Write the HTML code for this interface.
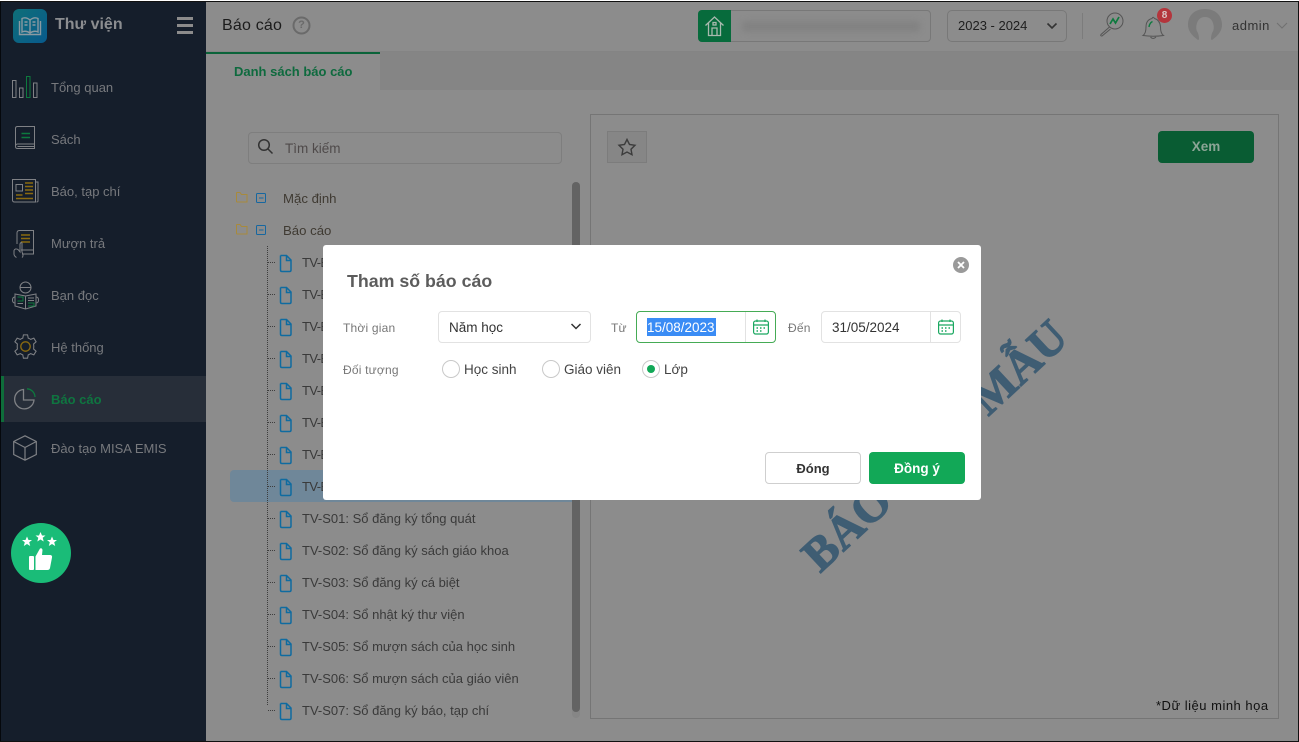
<!DOCTYPE html>
<html lang="vi"><head><meta charset="utf-8"><title>Báo cáo</title>
<style>
*{box-sizing:border-box}
html,body{margin:0;padding:0}
body{width:1299px;height:742px;overflow:hidden;position:relative;background:#8c8c8c;font-family:"Liberation Sans","DejaVu Sans",sans-serif;font-size:13px;color:#333}
.a{position:absolute;white-space:nowrap}
.t{position:absolute;white-space:nowrap;height:20px;line-height:20px;margin-top:1px}
svg{position:absolute;overflow:visible;fill:none}
.nav{color:#77797d;font-size:13px;left:51px}
.tr{left:302px;color:#3a3a3a;font-size:13px}
.lab{color:#777;font-size:12px;letter-spacing:.2px;margin-top:0}
.in{position:absolute;background:#fff;border:1px solid #e2e2e2;border-radius:4px}
.rad{position:absolute;width:18px;height:18px;border:1px solid #c9c9c9;border-radius:50%;background:#fff}
</style></head><body>
<!-- frame -->
<div class="a" style="left:0;top:0;width:1299px;height:1px;background:#fff"></div>
<div class="a" style="left:0;top:1px;width:1299px;height:1px;background:#111"></div>
<div class="a" style="left:0;top:741px;width:1299px;height:1px;background:#111"></div>
<div class="a" style="left:1298px;top:1px;width:1px;height:741px;background:#111"></div>

<!-- sidebar -->
<div class="a" style="left:0;top:2px;width:206px;height:739px;background:#151e2b;border-left:1px solid #05080c"></div>
<div class="a" style="left:1px;top:376px;width:205px;height:46px;background:#272e39"></div>
<div class="a" style="left:1px;top:376px;width:3px;height:46px;background:#0e6e3a"></div>

<div class="a" style="left:13px;top:9px;width:34px;height:34px;border-radius:6px;background:linear-gradient(135deg,#0f6f78,#085a8c)"></div>
<svg style="left:18px;top:15px" width="24" height="22" viewBox="0 0 24 22" stroke="#8a9aa2" stroke-width="1.4"><path d="M12 5C9 2.500 6 2.500 4 3.500V17C6 16 9 16 12 18C15 16 18 16 20 17V3.500C18 2.500 15 2.500 12 5ZM12 5V18M1.500 6V19.500H22.500V6M6.500 7H9.500M6.500 10H9.500M14.500 7H17.500M14.500 10H17.500"/></svg>
<div class="t" style="left:55px;top:14px;color:#8b8d90;font-size:16px;font-weight:bold">Thư viện</div>
<div class="a" style="left:177px;top:17px;width:16px;height:3px;background:#8c8c8c"></div>
<div class="a" style="left:177px;top:24px;width:16px;height:3px;background:#8c8c8c"></div>
<div class="a" style="left:177px;top:31px;width:16px;height:3px;background:#8c8c8c"></div>

<svg style="left:12px;top:76px" width="27" height="23" stroke="#7f8185" stroke-width="1"><rect x=".5" y="4.500" width="3.500" height="17"/><rect x="7.500" y="12" width="3.500" height="9.500"/><rect x="14.500" y=".5" width="3.500" height="21" stroke="#0d7a3e"/><rect x="21.500" y="7" width="3.500" height="14.500"/></svg>
<div class="t nav" style="top:77px">Tổng quan</div>

<svg style="left:15px;top:126px" width="21" height="26" stroke="#7f8185" stroke-width="1"><path d="M.5 20V2.500Q.5.500 2.500.500H19.500V18H2.500Q.5 18 .5 20.500Q.5 22.500 2.500 22.500H19.500V18M2.500 20.500H19.500"/><path d="M6.500 7.500H15M6.500 11.500H15" stroke="#0d7a3e" stroke-width="1.500"/></svg>
<div class="t nav" style="top:129px">Sách</div>

<svg style="left:12px;top:179px" width="27" height="24" stroke="#7f8185" stroke-width="1"><path d="M.5.500H23.500V23H2.500Q.5 23 .5 21ZM23.500 3H26V22Q26 23 24.500 23"/><rect x="4" y="5.500" width="6.500" height="6.500"/><path d="M13 4H21M13 7.500H21M13 11H21M13 14.500H21M4 16H10.500M4 19.500H21" stroke="#8a6a10" stroke-width="1.500"/></svg>
<div class="t nav" style="top:181px">Báo, tạp chí</div>

<svg style="left:13px;top:230px" width="22" height="28" stroke="#7f8185" stroke-width="1"><path d="M4 14V3Q4 .5 6.500.5H20.500V20H8M20.500 20V24H9"/><path d="M8 5H17M8 8.500H17M8 12H17" stroke="#8a6a10" stroke-width="1.500"/><path d="M9 22V13Q7.500 12 7 14V22L5 19.500Q2 18 1 20.500V24Q1 26 3.500 27.500M9 27.500Q11 26 9 22"/></svg>
<div class="t nav" style="top:233px">Mượn trả</div>

<svg style="left:12px;top:281px" width="27" height="29" stroke="#7f8185" stroke-width="1"><circle cx="13.500" cy="6.500" r="5.500"/><path d="M8 6.500H19M3 13L13.500 15L24 13V25L13.500 28L3 25ZM13.500 15V28M3 16Q.5 16 .5 19T3 22M24 16Q26.500 16 26.500 19T24 22"/><path d="M5.500 16H11V20H5.500M16 22H22V25H16" stroke="#0d7a3e"/><path d="M5.500 22.500H11M16 17H22M16 19.500H22"/></svg>
<div class="t nav" style="top:285px">Bạn đọc</div>

<svg style="left:13px;top:334px" width="25" height="25" viewBox="0 0 24 24" stroke="#7f8185" stroke-width="1"><path d="M10 .8H14L14.600 4Q16 4.500 17 5.200L20 4L22.200 7.500L19.800 9.600Q20.100 12 19.800 14.400L22.200 16.500L20 20L17 18.800Q16 19.500 14.600 20L14 23.200H10L9.400 20Q8 19.500 7 18.800L4 20L1.800 16.500L4.200 14.400Q3.900 12 4.200 9.600L1.800 7.500L4 4L7 5.200Q8 4.500 9.400 4Z"/><circle cx="12" cy="12" r="4.500" stroke="#8a6a10" stroke-width="1.300"/></svg>
<div class="t nav" style="top:337px">Hệ thống</div>

<svg style="left:14px;top:388px" width="22" height="22" stroke="#7f8185" stroke-width="1.300"><path d="M9.500 1.500A9.700 9.700 0 1 0 20 12H9.500Z"/><path d="M13 .8A8.500 8.500 0 0 1 21 9" stroke="#0d7a3e"/></svg>
<div class="t" style="left:51px;top:389px;color:#0f7540;font-weight:bold;font-size:13px">Báo cáo</div>

<svg style="left:13px;top:435px" width="24" height="26" stroke="#7f8185" stroke-width="1.200"><path d="M12 .8L23.300 6.500V19.500L12 25.200L.7 19.500V6.500ZM.7 6.500L12 12.500L23.300 6.500M12 12.500V25.200"/></svg>
<div class="t nav" style="top:438px">Đào tạo MISA EMIS</div>

<div class="a" style="left:11px;top:523px;width:60px;height:60px;border-radius:50%;background:#1abc78"></div>
<svg style="left:11px;top:523px" width="60" height="60"><g fill="#fff"><path d="M16 13.500L17.500 17H21L18.200 19.300L19.200 23L16 21L12.800 23L13.800 19.300L11 17H14.500Z"/><path d="M29.500 9L31 12.500H34.500L31.700 14.800L32.700 18.500L29.500 16.500L26.300 18.500L27.300 14.800L24.500 12.500H28Z"/><path d="M41 13.500L42.500 17H46L43.200 19.300L44.200 23L41 21L37.800 23L38.800 19.300L36 17H39.500Z"/><rect x="18" y="33" width="5" height="14" rx="1"/><path d="M24.500 33.500L29 25.500Q31 24.500 31.500 27L31 32H39.500Q41.500 32.500 41 34.500L39 45Q38.500 47 36.500 47H24.500Z"/></g></svg>

<!-- header -->
<div class="a" style="left:206px;top:51px;width:1092px;height:2px;background:#848484"></div>
<div class="t" style="left:222px;top:15px;color:#1c1c1c;font-size:16px;letter-spacing:.2px">Báo cáo</div>
<svg style="left:292px;top:16px" width="19" height="19" stroke="#6a6a6a" stroke-width="2"><circle cx="9.500" cy="9.500" r="8"/></svg>
<div class="t" style="left:292px;top:15px;width:19px;text-align:center;font-size:11px;font-weight:bold;color:#6a6a6a;margin-top:0">?</div>

<div class="a" style="left:698px;top:10px;width:233px;height:32px;border:1px solid #787878;border-radius:4px"></div>
<div class="a" style="left:698px;top:10px;width:33px;height:32px;background:#076b3c;border-radius:4px 0 0 4px"></div>
<svg style="left:704px;top:15px" width="21" height="22" stroke="#a9b9ae" stroke-width="1.300"><path d="M1.500 10.500L10.500 2L19.500 10.500M4.500 8V20.500H16.500V8M8 20.500V13H13V20.500"/><rect x="9" y="7.500" width="3" height="2.500"/></svg>
<div class="a" style="left:742px;top:21px;width:178px;height:11px;background:#828282;filter:blur(3px);border-radius:4px"></div>

<div class="a" style="left:947px;top:10px;width:120px;height:32px;border:1px solid #787878;border-radius:5px"></div>
<div class="t" style="left:958px;top:15px;color:#1e1e1e;font-size:13px">2023 - 2024</div>
<svg style="left:1046px;top:22px" width="12" height="8" stroke="#333" stroke-width="1.600"><path d="M1.500 1.500L6 6L10.500 1.500"/></svg>
<div class="a" style="left:1082px;top:13px;width:1px;height:26px;background:#7c7c7c"></div>

<svg style="left:1099px;top:12px" width="26" height="25" stroke="#555" stroke-width="1"><circle cx="16" cy="9" r="8"/><path d="M10.500 15L2 22.500Q1 24 3 24L11.500 17"/><path d="M11 12L14 7L16.500 11L20 5" stroke="#0d7a3e" stroke-width="1.700"/></svg>
<svg style="left:1141px;top:12px" width="26" height="28" stroke="#555" stroke-width="1"><path d="M2 23.500Q5 21.500 5 15Q5 8 11 6.500Q12 4 13.500 6.500Q19 8 19.500 15Q19.500 21.500 22.500 23.500Q12 25 2 23.500ZM9.500 25Q12 28 15 25"/><path d="M8 15Q8.500 11 11.500 9.500" stroke="#0d7a3e" stroke-width="1.400"/></svg>
<div class="a" style="left:1157px;top:8px;width:15px;height:15px;border-radius:50%;background:#b4353c;color:#d9c4c4;font-size:10px;font-weight:bold;text-align:center;line-height:15px">8</div>
<svg style="left:1188px;top:9px" width="34" height="32"><path d="M10 31Q0 24 0 16C0 6 7 0 17 0S34 6 34 16Q34 24 24 31Q22 31 24 24Q27 20 25 14Q23 8 17 8T9 14Q7 20 10 24Q12 31 10 31Z" fill="#7b7b7b"/></svg>
<div class="t" style="left:1232px;top:15px;color:#333;font-size:13px;letter-spacing:.5px">admin</div>
<svg style="left:1276px;top:22px" width="12" height="8" stroke="#707070" stroke-width="1"><path d="M1 1L6 6L11 1"/></svg>

<!-- tab strip -->
<div class="a" style="left:206px;top:52px;width:1092px;height:38px;background:#858585"></div>
<div class="a" style="left:206px;top:52px;width:174px;height:38px;background:#8c8c8c;border-top:2px solid #0a6339"></div>
<div class="t" style="left:234px;top:61px;color:#0e6a3e;font-weight:bold;font-size:13px">Danh sách báo cáo</div>

<!-- search -->
<div class="a" style="left:248px;top:132px;width:314px;height:32px;border:1px solid #7e7e7e;border-radius:4px"></div>
<svg style="left:257px;top:138px" width="17" height="17" stroke="#333" stroke-width="1.500"><circle cx="7" cy="7" r="5.300"/><path d="M11 11L15.500 15.500"/></svg>
<div class="t" style="left:285px;top:138px;color:#4f4a4a;font-size:13.500px">Tìm kiếm</div>

<!-- tree -->
<div class="a" style="left:230px;top:470px;width:350px;height:32px;background:#6f8799;border-radius:4px"></div>
<svg style="left:236px;top:192px" width="12" height="11" stroke="#a88a3c" stroke-width="1"><path d="M.5 9.500V1Q.5.5 1 .5H4L5.500 2.500H11V10H1Z"/></svg>
<svg style="left:236px;top:224px" width="12" height="11" stroke="#a88a3c" stroke-width="1"><path d="M.5 9.500V1Q.5.5 1 .5H4L5.500 2.500H11V10H1Z"/></svg>
<svg style="left:256px;top:193px" width="11" height="11" stroke="#1667a0" stroke-width="1"><rect x=".5" y=".5" width="9" height="9" rx="1"/><path d="M3 5H7.500"/></svg>
<svg style="left:256px;top:225px" width="11" height="11" stroke="#1667a0" stroke-width="1"><rect x=".5" y=".5" width="9" height="9" rx="1"/><path d="M3 5H7.500"/></svg>
<div class="t" style="left:283px;top:188px;color:#3f3a32;font-size:13.200px">Mặc định</div>
<div class="t" style="left:283px;top:220px;color:#3f3a32;font-size:13.200px">Báo cáo</div>
<div class="a" style="left:267px;top:246px;width:1px;height:459px;border-left:1px dotted #3d3d3d"></div>
<svg style="left:267px;top:250px" width="30" height="470" stroke="#0f6ba0" stroke-width="1.500">
<defs><path id="f" d="M13.500 5.500H19.500L24 10V20Q24 21.500 22.500 21.500H15Q13.500 21.500 13.500 20V5.500M19.500 5.500V10.500H24"/></defs>
<use href="#f" y="0"/><use href="#f" y="32"/><use href="#f" y="64"/><use href="#f" y="96"/><use href="#f" y="128"/><use href="#f" y="160"/><use href="#f" y="192"/><use href="#f" y="224"/><use href="#f" y="256"/><use href="#f" y="288"/><use href="#f" y="320"/><use href="#f" y="352"/><use href="#f" y="384"/><use href="#f" y="416"/><use href="#f" y="448"/>
<path d="M1 12.500H8M1 44.500H8M1 76.500H8M1 108.500H8M1 140.500H8M1 172.500H8M1 204.500H8M1 236.500H8M1 268.500H8M1 300.500H8M1 332.500H8M1 364.500H8M1 396.500H8M1 428.500H8M1 460.500H8" stroke="#3d3d3d" stroke-width="1" stroke-dasharray="1 1"/></svg>
<div class="t tr" style="top:508px">TV-S01: Sổ đăng ký tổng quát</div>
<div class="t tr" style="top:540px">TV-S02: Sổ đăng ký sách giáo khoa</div>
<div class="t tr" style="top:572px">TV-S03: Sổ đăng ký cá biệt</div>
<div class="t tr" style="top:604px">TV-S04: Sổ nhật ký thư viện</div>
<div class="t tr" style="top:636px">TV-S05: Sổ mượn sách của học sinh</div>
<div class="t tr" style="top:668px">TV-S06: Sổ mượn sách của giáo viên</div>
<div class="t tr" style="top:700px">TV-S07: Sổ đăng ký báo, tạp chí</div>
<div class="a" style="left:572px;top:182px;width:8px;height:536px;background:#868686;border-radius:4px"></div>
<div class="a" style="left:572px;top:182px;width:8px;height:530px;background:#636363;border-radius:4px"></div>

<!-- report panel -->
<div class="a" style="left:590px;top:114px;width:689px;height:605px;border:1px solid #757575"></div>
<div class="a" style="left:607px;top:131px;width:40px;height:32px;background:#868686;border:1px solid #7c7c7c"></div>
<svg style="left:617px;top:138px" width="20" height="18" stroke="#3c3c3c" stroke-width="1.400"><path d="M10 1.500L12.500 6.500L18 7.300L14 11.200L15 16.700L10 14L5 16.700L6 11.200L2 7.300L7.500 6.500Z"/></svg>
<div class="a" style="left:1158px;top:131px;width:96px;height:32px;background:#095c33;border-radius:4px;color:#8ca596;font-weight:bold;font-size:13.500px;text-align:center;line-height:32px">Xem</div>
<div class="a" style="left:935px;top:446px;width:0;height:0"><div class="a" style="left:-200px;top:-30px;width:400px;height:60px;line-height:60px;text-align:center;transform:rotate(-43deg);font-family:'Liberation Serif','DejaVu Serif',serif;font-weight:bold;font-size:47px;color:#3f5d73;-webkit-text-stroke:1.200px #3f5d73">BÁO CÁO MẪU</div></div>
<div class="t" style="left:1156px;top:695px;color:#111;font-size:13px;letter-spacing:.5px">*Dữ liệu minh họa</div>

<!-- partial rows peeking out left of modal -->
<div class="t tr" style="top:252px;letter-spacing:-.6px">TV-B</div>
<div class="t tr" style="top:284px;letter-spacing:-.6px">TV-B</div>
<div class="t tr" style="top:316px;letter-spacing:-.6px">TV-B</div>
<div class="t tr" style="top:348px;letter-spacing:-.6px">TV-B</div>
<div class="t tr" style="top:380px;letter-spacing:-.6px">TV-B</div>
<div class="t tr" style="top:412px;letter-spacing:-.6px">TV-B</div>
<div class="t tr" style="top:444px;letter-spacing:-.6px">TV-B</div>
<div class="t tr" style="top:476px;letter-spacing:-.6px">TV-B</div>

<!-- modal -->
<div class="a" style="left:323px;top:245px;width:658px;height:255px;background:#fff;border-radius:3px"></div>
<div class="t" style="left:347px;top:270px;color:#5c5c5c;font-size:17.800px;font-weight:bold">Tham số báo cáo</div>
<div class="a" style="left:953px;top:257px;width:16px;height:16px;border-radius:50%;background:#9a9a9a"></div>
<svg style="left:953px;top:257px" width="16" height="16" stroke="#fff" stroke-width="1.800"><path d="M5 5L11 11M11 5L5 11"/></svg>

<div class="t lab" style="left:343px;top:318px">Thời gian</div>
<div class="in" style="left:438px;top:311px;width:153px;height:32px"></div>
<div class="t" style="left:449px;top:317px;color:#333;font-size:13.500px">Năm học</div>
<svg style="left:570px;top:323px" width="12" height="8" stroke="#333" stroke-width="1.500"><path d="M1.500 1L6 5.500L10.500 1"/></svg>

<div class="t lab" style="left:611px;top:318px">Từ</div>
<div class="in" style="left:636px;top:311px;width:140px;height:32px;border-color:#45ab55"></div>
<div class="a" style="left:745px;top:312px;width:1px;height:30px;background:#e2e2e2"></div>
<div class="t" style="left:647px;top:317px;height:18px;line-height:20px;background:#3a8cf5;color:#fff;font-size:13.500px;width:69px;overflow:hidden">15/08/2023</div>
<svg style="left:753px;top:319px" width="16" height="16" stroke="#1aa860" stroke-width="1.200"><rect x=".6" y="2" width="14.800" height="13" rx="2"/><path d="M1 6H15M4 .5V3M12 .5V3"/><path d="M3.500 9H5M7 9H8.500M10.500 9H12M3.500 12H5M7 12H8.500" stroke-width="1.500"/></svg>

<div class="t lab" style="left:788px;top:318px">Đến</div>
<div class="in" style="left:821px;top:311px;width:140px;height:32px"></div>
<div class="a" style="left:930px;top:312px;width:1px;height:30px;background:#e2e2e2"></div>
<div class="t" style="left:832px;top:317px;color:#333;font-size:13.500px">31/05/2024</div>
<svg style="left:938px;top:319px" width="16" height="16" stroke="#1aa860" stroke-width="1.200"><rect x=".6" y="2" width="14.800" height="13" rx="2"/><path d="M1 6H15M4 .5V3M12 .5V3"/><path d="M3.500 9H5M7 9H8.500M10.500 9H12M3.500 12H5M7 12H8.500" stroke-width="1.500"/></svg>

<div class="t lab" style="left:343px;top:360px">Đối tượng</div>
<div class="rad" style="left:442px;top:360px"></div>
<div class="t" style="left:464px;top:359px;color:#444;font-size:13.500px">Học sinh</div>
<div class="rad" style="left:542px;top:360px"></div>
<div class="t" style="left:564px;top:359px;color:#444;font-size:13.500px">Giáo viên</div>
<div class="rad" style="left:642px;top:360px"></div>
<div class="a" style="left:647px;top:365px;width:8px;height:8px;border-radius:50%;background:#12a857"></div>
<div class="t" style="left:664px;top:359px;color:#444;font-size:13.500px">Lớp</div>

<div class="a" style="left:765px;top:452px;width:96px;height:32px;background:#fff;border:1px solid #cfcfcf;border-radius:4px;color:#333;font-weight:bold;font-size:13px;text-align:center;line-height:31px">Đóng</div>
<div class="a" style="left:869px;top:452px;width:96px;height:32px;background:#12a857;border-radius:4px;color:#fff;font-weight:bold;font-size:13.500px;text-align:center;line-height:33px">Đồng ý</div>
</body></html>
